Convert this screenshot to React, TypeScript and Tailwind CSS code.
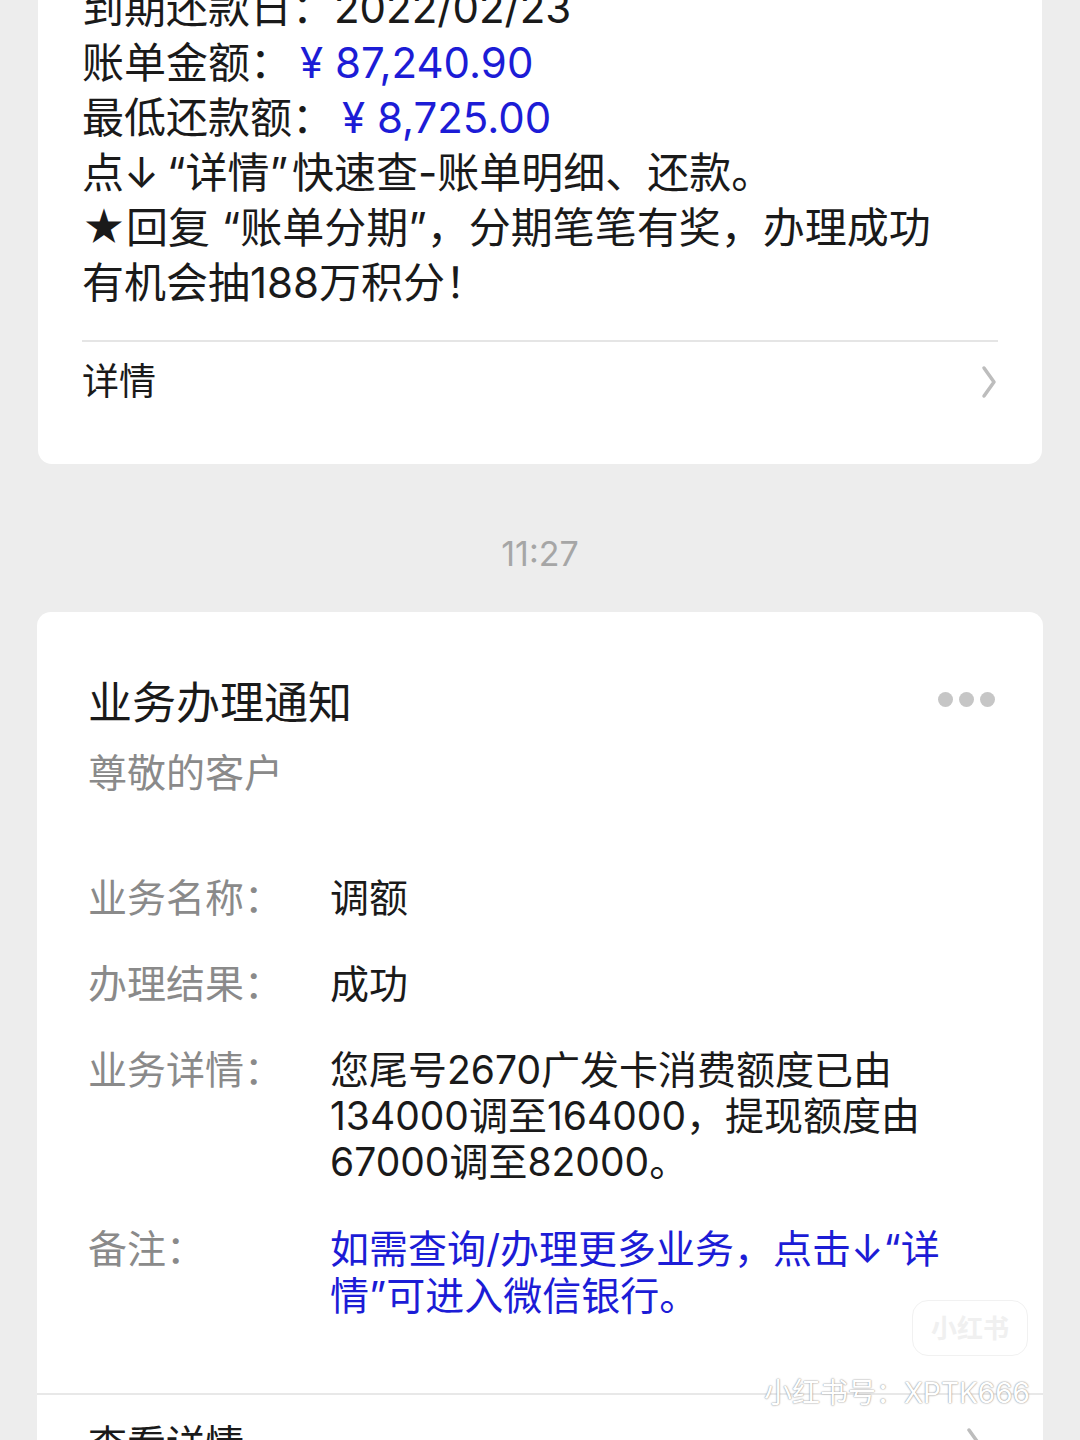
const font = { fontFamily: 'Inter, "Noto Sans CJK SC", sans-serif' }

function Chevron() {
  return (
    <svg width="18" height="34" viewBox="0 0 18 34" fill="none">
      <path d="M4 3 L14 17 L4 31" stroke="#bdbdbd" strokeWidth="3.5" strokeLinecap="round" strokeLinejoin="round" />
    </svg>
  )
}

export default function App() {
  return (
    <div
      className="relative h-[1440px] w-[1080px] overflow-hidden bg-[#ededed]"
      style={font}
    >
      {/* Bill card (top cut off) */}
      <div className="mx-[38px] -mt-[40px] rounded-[14px] bg-white pt-[20px] pb-[42px]">
        <div className="px-[44px] text-[42px] leading-[55px] text-[#1a1a1a]">
          <div>到期还款日：2022/02/23</div>
          <div>
            账单金额：<span className="ml-[8px] text-[#1c1cd6]">¥ 87,240.90</span>
          </div>
          <div>
            最低还款额：<span className="ml-[8px] text-[#1c1cd6]">¥ 8,725.00</span>
          </div>
          <div>
            点↓<span className="ml-[8px]">“详情”</span>
            <span className="ml-[4px]">快速查-账单明细、还款。</span>
          </div>
          <div>★回复 “账单分期”，分期笔笔有奖，办理成功</div>
          <div>有机会抽188万积分！</div>
        </div>
        <div className="mx-[44px] mt-[30px] border-t-2 border-[#e5e5e5]" />
        <div className="mx-[44px] flex h-[80px] items-center justify-between">
          <span className="text-[37px] text-[#1a1a1a]">详情</span>
          <Chevron />
        </div>
      </div>

      {/* Time */}
      <div className="mt-[70px] text-center text-[34px] leading-[40px] text-[#a6a6a6]">11:27</div>

      {/* Notice card */}
      <div className="mx-[37px] mt-[38px] rounded-[14px] bg-white pt-[63px]">
        <div className="flex items-center justify-between pl-[51px] pr-[48px]">
          <span className="text-[44px] leading-[56px] text-[#1a1a1a]">业务办理通知</span>
          <div className="mt-[-8px] flex gap-[6px]">
            <span className="h-[15px] w-[15px] rounded-full bg-[#c6c6c6]" />
            <span className="h-[15px] w-[15px] rounded-full bg-[#c6c6c6]" />
            <span className="h-[15px] w-[15px] rounded-full bg-[#c6c6c6]" />
          </div>
        </div>
        <div className="mt-[17px] pl-[51px] text-[39px] leading-[50px] text-[#8a8a8a]">尊敬的客户</div>

        <div className="mt-[77px] flex flex-col gap-[40px] pl-[51px] pr-[40px] text-[39px] leading-[46px]">
          <div className="flex">
            <span className="w-[242px] shrink-0 text-[#8a8a8a]">业务名称：</span>
            <span className="text-[#1a1a1a]">调额</span>
          </div>
          <div className="flex">
            <span className="w-[242px] shrink-0 text-[#8a8a8a]">办理结果：</span>
            <span className="text-[#1a1a1a]">成功</span>
          </div>
          <div className="flex">
            <span className="w-[242px] shrink-0 text-[#8a8a8a]">业务详情：</span>
            <span className="text-[#1a1a1a]">
              您尾号2670广发卡消费额度已由
              <br />
              134000调至164000，提现额度由
              <br />
              67000调至82000。
            </span>
          </div>
          <div className="flex leading-[47px]">
            <span className="w-[242px] shrink-0 text-[#8a8a8a]">备注：</span>
            <span className="text-[#1c1cd6]">
              如需查询/办理更多业务，点击↓“详
              <br />
              情”可进入微信银行。
            </span>
          </div>
        </div>

        <div className="mt-[74px] border-t-2 border-[#e8e8e8]" />
        <div className="flex items-center justify-between pl-[51px] pr-[60px] pt-[24px] pb-[30px]">
          <span className="text-[39px] leading-[50px] text-[#1a1a1a]">查看详情</span>
          <Chevron />
        </div>
      </div>

      {/* Watermark */}
      <div className="absolute left-[912px] top-[1300px] flex h-[56px] w-[116px] items-center justify-center rounded-[16px] border border-[#f1f1f1] text-[26px] font-bold text-[#f0f0f0]">
        小红书
      </div>
      <div
        className="absolute left-[764px] top-[1373px] text-[28px] leading-[40px] text-white"
        style={{ textShadow: '0 0 2px #9a9a9a, 0 0 1px #9a9a9a' }}
      >
        小红书号：XPTK666
      </div>
    </div>
  )
}
